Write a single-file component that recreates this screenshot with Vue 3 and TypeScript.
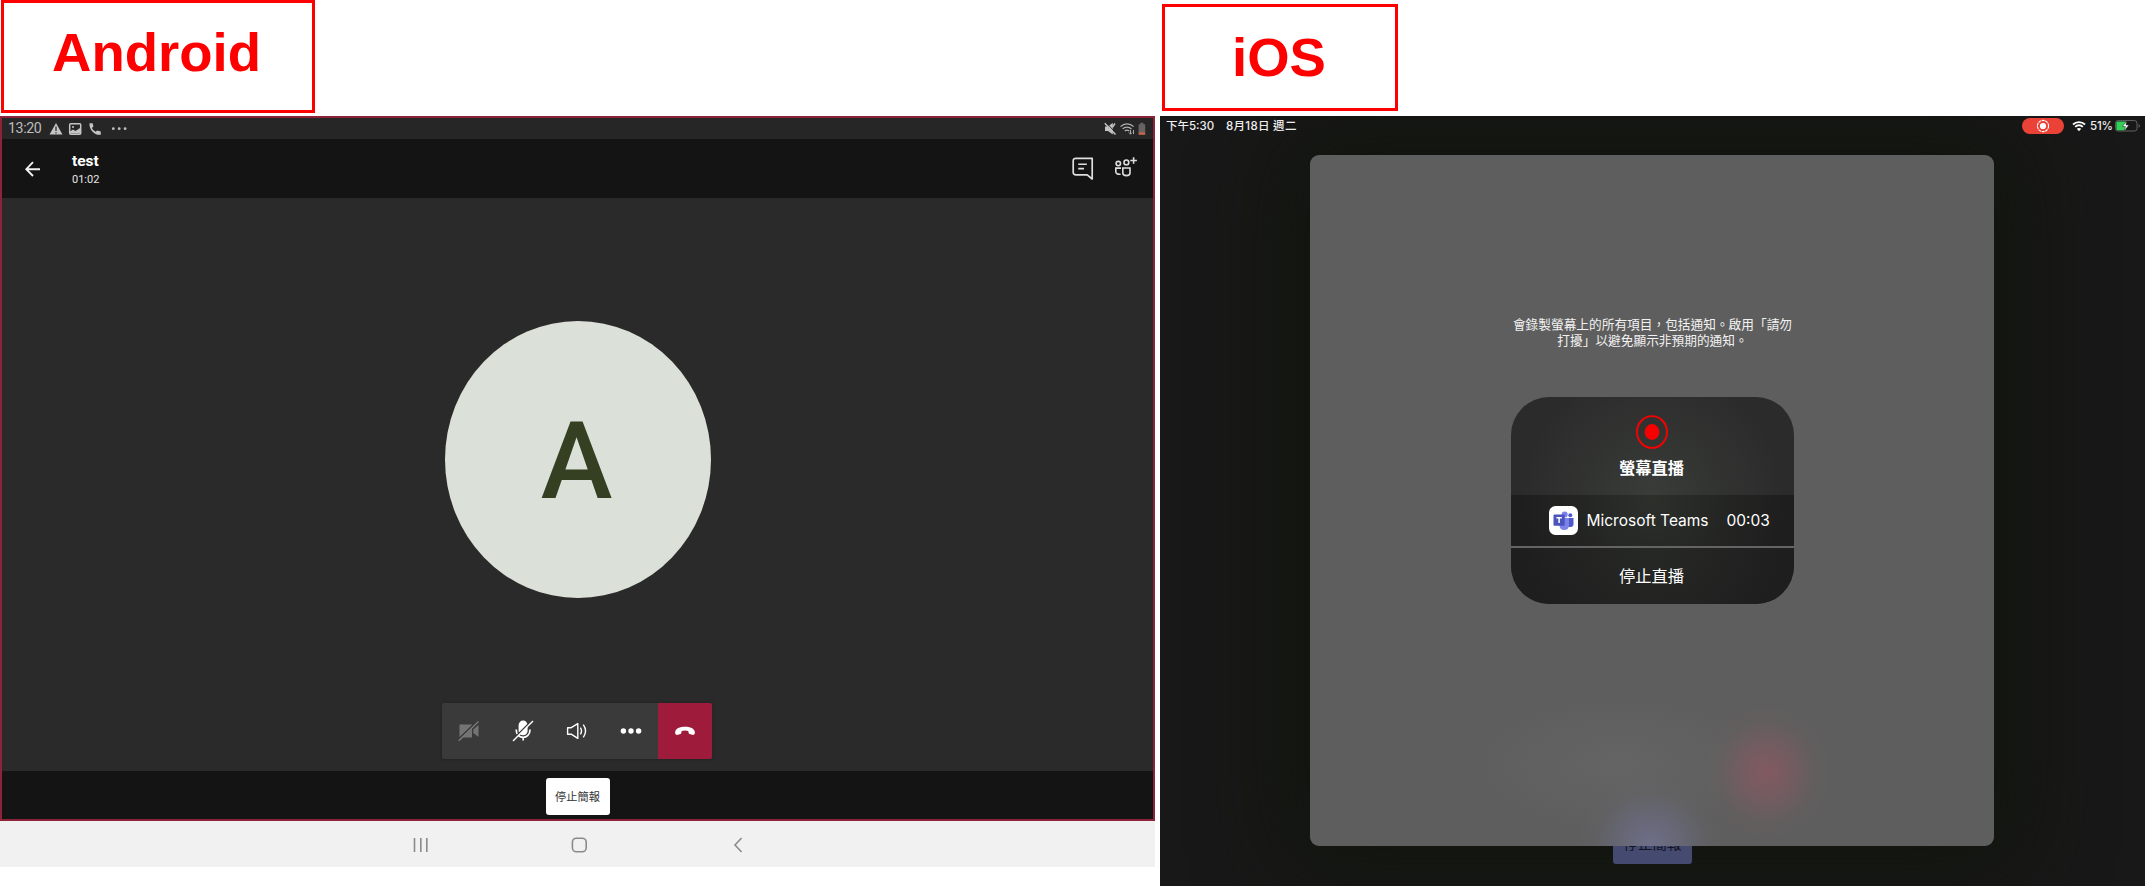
<script setup lang="ts">
const avatarLetter: string = 'A'
const noticeLines: string[] = [
  '會錄製螢幕上的所有項目，包括通知。啟用「請勿',
  '打擾」以避免顯示非預期的通知。',
]
</script>

<template>
  <main class="board">
    <section class="column android">
      <div class="label label-android">Android</div>
      <div class="screen">
        <div class="a-status">
          <span class="a-clock">13:20</span>
          <svg class="a-left-icons" viewBox="0 0 80 14" width="80" height="14">
            <path d="M7 1 L13.5 12.5 H0.5Z" fill="#c4c4c4" />
            <path d="M7 4.5V9M7 10.2V11.6" stroke="#262626" stroke-width="1.2" />
            <rect x="20.7" y="1.7" width="11" height="10.6" rx="1" fill="none" stroke="#c4c4c4" stroke-width="1.5" />
            <path d="M21 11.5V9.5L24 7.5L26.5 9L31 6V11.5Z" fill="#c4c4c4" />
            <circle cx="24" cy="5" r="1" fill="#c4c4c4" />
            <path d="M40.5 1.2L43.6 1.2L44.4 4.5L42.9 6C43.9 7.8 45 9 46.7 9.8L48.2 8.4L51.8 9.4V12.8C45 13.4 40 7.5 40.5 1.2Z" fill="#c4c4c4" />
            <circle cx="64.3" cy="6.7" r="1.4" fill="#bdbdbd" />
            <circle cx="70.2" cy="6.7" r="1.4" fill="#bdbdbd" />
            <circle cx="76.1" cy="6.7" r="1.4" fill="#bdbdbd" />
          </svg>
          <svg class="a-right-icons" viewBox="0 0 42 14" width="42" height="14">
            <path d="M1 4.6H4L8.8 .8V12.6L4 9H1Z" fill="#c2c2c2" />
            <path d="M1.8 .4L12 11" stroke="#262626" stroke-width="1" />
            <path d="M.8 1.2L11.5 12.4M8.6 5L11 1.5" stroke="#c2c2c2" stroke-width="1.5" />
            <path d="M16.5 4.6C20 1 26 1 29.6 4.6M18.6 6.9C21 4.6 25 4.6 27.5 6.9M20.8 9.1C22 8 24 8 25.2 9.1" fill="none" stroke="#b0b0b0" stroke-width="1.3" />
            <path d="M26.5 8V12M25 10.6L26.5 12.2L28 10.6M29.5 12V8" fill="none" stroke="#aaa" stroke-width="1" />
            <path d="M34.6 2.3H36.4V.8H39.4V2.3H41.2V10.7H34.6Z" fill="#686464" />
            <rect x="34.6" y="10.3" width="6.6" height="2.5" fill="#c4694b" />
          </svg>
        </div>
        <header class="a-header">
          <svg class="a-back" viewBox="0 0 16 16" width="16" height="16">
            <path d="M15 8.2H1.5M8 1.2L1.3 8.2L8 15" fill="none" stroke="#f2f2f2" stroke-width="1.9" />
          </svg>
          <div class="a-title">
            <strong>test</strong>
            <span>01:02</span>
          </div>
          <svg class="a-chat" viewBox="0 0 22 24" width="22" height="24">
            <path d="M20.2 22L15.2 17.8H3.8C2.3 17.8 1.2 16.8 1.2 15.2V3.8C1.2 2.3 2.3 1.3 3.8 1.3H20.2Z" fill="none" stroke="#dedede" stroke-width="1.7" stroke-linejoin="round" />
            <path d="M6.2 7.2H14.8M6.2 11.6H12" stroke="#dedede" stroke-width="1.6" />
          </svg>
          <svg class="a-people" viewBox="0 0 24 22" width="24" height="22">
            <g fill="none" stroke="#dedede" stroke-width="1.6">
              <circle cx="4.3" cy="7.6" r="2.2" />
              <circle cx="12.4" cy="6.4" r="2.4" />
              <path d="M7 12.1H1.8V15.8C1.8 17.6 3.6 18.6 6.6 18.2" />
              <path d="M8.8 12H16V17Q16 19.6 12.4 19.6Q8.8 19.6 8.8 17Z" />
              <path d="M19.6 1.2V7.8M16.3 4.5H22.9" />
            </g>
          </svg>
        </header>
        <div class="a-stage">
          <div class="avatar">{{ avatarLetter }}</div>
          <div class="toolbar">
            <div class="tool">
              <svg viewBox="0 0 22 22" width="22" height="22">
                <path d="M1.5 4.5H14V17.5H1.5ZM15.3 9.5L20.5 5V17L15.3 13Z" fill="#747474" />
                <path d="M0 20.2L20 1" stroke="#3a3a3a" stroke-width="2.6" />
                <path d="M0.8 20.8L20.6 1.4" stroke="#808080" stroke-width="1.3" />
              </svg>
            </div>
            <div class="tool">
              <svg viewBox="0 0 22 22" width="22" height="22">
                <rect x="6.6" y=".6" width="9" height="14.6" rx="4.4" fill="#fff" />
                <path d="M4.2 9.5C4 20 18.2 20 18 9.5M11.2 17.5V20.5" fill="none" stroke="#fff" stroke-width="1.7" />
                <path d="M0 20.4L20 .4" stroke="#3a3a3a" stroke-width="1.6" />
                <path d="M1 21L21 1" stroke="#fff" stroke-width="1.5" />
              </svg>
            </div>
            <div class="tool">
              <svg viewBox="0 0 22 22" width="22" height="22">
                <path d="M1.6 7.7H5.2L11.8 3.6V18.4L5.2 14.2H1.6Z" fill="none" stroke="#fff" stroke-width="1.4" stroke-linejoin="round" />
                <path d="M14.4 7.6Q16.6 11 14.4 14.4M17.3 4.6Q21.8 11 17.3 17.4" fill="none" stroke="#fff" stroke-width="1.4" />
              </svg>
            </div>
            <div class="tool">
              <svg viewBox="0 0 22 22" width="22" height="22">
                <circle cx="3.4" cy="11" r="2.7" fill="#fff" />
                <circle cx="11" cy="11" r="2.7" fill="#fff" />
                <circle cx="18.6" cy="11" r="2.7" fill="#fff" />
              </svg>
            </div>
            <div class="tool hangup">
              <svg viewBox="0 0 22 22" width="22" height="22">
                <path d="M1.1 12.2C1.6 5 20.4 5 20.9 12.2C21 14.2 19.7 15.2 18.2 14.8L15.5 14C14.4 13.6 14.6 12.4 14.3 11.1C12.4 10.3 9.6 10.3 7.7 11.1C7.4 12.4 7.6 13.6 6.5 14L3.8 14.8C2.3 15.2 1 14.2 1.1 12.2Z" fill="#fff" />
              </svg>
            </div>
          </div>
        </div>
        <div class="a-footer">
          <button class="stop-share">停止簡報</button>
        </div>
      </div>
      <nav class="a-nav">
        <svg viewBox="0 0 330 16" width="330" height="16">
          <g fill="none" stroke="#8b8b8b" stroke-width="1.6">
            <path d="M1.5 1V15M7.8 1V15M13.8 1V15" />
            <rect x="159.4" y="1.2" width="13.8" height="13.6" rx="4" />
            <path d="M328.6 1L322 8L328.6 15" />
          </g>
        </svg>
      </nav>
    </section>

    <section class="column ios">
      <div class="label label-ios">iOS</div>
      <div class="tablet">
        <div class="i-status">
          <span class="i-time">下午5:30</span>
          <span class="i-date">8月18日 週二</span>
          <span class="rec-pill">
            <svg viewBox="0 0 14 14" width="14" height="14">
              <circle cx="7" cy="7" r="5.6" fill="none" stroke="#fff" stroke-width="1.1" stroke-dasharray="2.9 .6" />
              <circle cx="7" cy="7" r="3.1" fill="#fff" />
            </svg>
          </span>
          <svg class="i-wifi" viewBox="0 0 14 12" width="14" height="12">
            <path d="M1 4.5C4.3 1.2 9.7 1.2 13 4.5M3.2 6.8C5.3 4.7 8.7 4.7 10.8 6.8" fill="none" stroke="#fff" stroke-width="1.8" />
            <path d="M4.8 8.8Q7 7 9.2 8.8L7 11.2Z" fill="#fff" />
          </svg>
          <span class="i-percent">51%</span>
          <svg class="i-battery" viewBox="0 0 26 12" width="26" height="12">
            <rect x=".6" y=".6" width="21.4" height="10.4" rx="2.4" fill="none" stroke="#636363" stroke-width="1" />
            <path d="M2.8 1.4H11V10.2H2.8Q1.4 10.2 1.4 9.2V2.4Q1.4 1.4 2.8 1.4Z" fill="#31d158" />
            <path d="M11.8 1L7.4 6.5H10.4L9.6 10.6L14 5H11Z" fill="#fff" stroke="#171817" stroke-width=".5" />
            <path d="M23.6 4V7.8Q25 7 25 5.9Q25 4.8 23.6 4Z" fill="#636363" />
          </svg>
        </div>
        <div class="modal">
          <p class="notice"><span v-for="line in noticeLines" :key="line">{{ line }}</span></p>
          <div class="card">
            <div class="card-head">
              <svg viewBox="0 0 34 34" width="34" height="34">
                <ellipse cx="17" cy="17" rx="15" ry="15.9" fill="none" stroke="#f80000" stroke-width="1.9" />
                <ellipse cx="17" cy="17" rx="7.4" ry="7.9" fill="#f80000" />
              </svg>
              <strong>螢幕直播</strong>
            </div>
            <div class="card-app">
              <svg class="teams" viewBox="0 0 29 29" width="29" height="29">
                <rect width="29" height="29" rx="6.5" fill="#fff" />
                <circle cx="15.7" cy="8.5" r="3" fill="#7b83eb" />
                <circle cx="21.3" cy="9.3" r="2" fill="#5059c9" />
                <path d="M18 12H24.5V18Q24.5 21 21.5 21H18Z" fill="#5059c9" />
                <path d="M10.5 12H20V19Q20 24 15.2 24Q10.5 24 10.5 19Z" fill="#7b83eb" />
                <rect x="4.5" y="8.6" width="11.2" height="11.2" rx="1" fill="#4b53bc" />
                <path d="M7.4 11.7H12.8M10.1 11.7V17" stroke="#fff" stroke-width="1.5" />
              </svg>
              <span class="app-name">Microsoft Teams</span>
              <span class="app-time">00:03</span>
            </div>
            <div class="card-stop">停止直播</div>
          </div>
        </div>
        <div class="peek"><span>停止簡報</span></div>
      </div>
    </section>
  </main>
</template>

<style>
body {
  margin: 0;
  background: #fff;
}
</style>

<style scoped>
.board {
  display: flex;
  gap: 5px;
  width: 2145px;
  height: 886px;
  overflow: hidden;
  font-family: Roboto, "Noto Sans CJK TC", sans-serif;
}
.column {
  display: flex;
  flex-direction: column;
}
.android { width: 1155px; }
.ios { width: 985px; }
.label {
  box-sizing: border-box;
  border: 3px solid #f00;
  color: #f00;
  font: bold 54.5px/1 "Liberation Sans", sans-serif;
  text-align: center;
}
.label-android {
  width: 314px;
  height: 113px;
  margin: 0 0 3px 1px;
  padding: 23px 3px 0 0;
}
.label-ios {
  width: 236px;
  height: 107px;
  margin: 4px 0 5px 2px;
  padding: 24px 2px 0 0;
}
.screen {
  box-sizing: border-box;
  height: 705px;
  border: 2px solid #8c2338;
  display: flex;
  flex-direction: column;
  background: #2a2a2a;
}
.a-status {
  height: 21px;
  display: flex;
  align-items: center;
  background: #262626;
  padding: 0 7px 0 6px;
}
.a-clock {
  width: 41px;
  color: #bdbdbd;
  font-size: 14.2px;
  line-height: 21px;
  letter-spacing: -.4px;
}
.a-right-icons { margin-left: auto; }
.a-header {
  height: 59px;
  display: flex;
  align-items: center;
  background: #141414;
  padding: 0 15px 0 23px;
}
.a-title {
  display: flex;
  flex-direction: column;
  margin: 3px 0 0 31px;
  color: #fff;
}
.a-title strong { font-size: 15.5px; line-height: 19px; }
.a-title span { font-size: 11px; line-height: 17px; color: #e6e6e6; }
.a-chat { margin-left: auto; }
.a-people { margin: 0 0 3px 20px; }
.a-stage {
  flex: 1;
  display: flex;
  flex-direction: column;
  align-items: center;
  background: #2a2a2a;
}
.avatar {
  width: 266px;
  height: 277px;
  margin-top: 123px;
  border-radius: 50%;
  background: #dbe1d8;
  color: #344021;
  font-size: 108px;
  font-weight: 500;
  line-height: 280px;
  text-align: center;
  text-indent: -2px;
}
.toolbar {
  display: flex;
  margin: 105px 1px 0 0;
  border-radius: 2px;
  overflow: hidden;
  background: #3a3a3a;
  box-shadow: 0 0 3px #202020;
}
.tool {
  width: 54px;
  height: 56px;
  display: flex;
  align-items: center;
  justify-content: center;
}
.hangup { background: #9e1b3b; }
.a-footer {
  height: 48px;
  display: flex;
  align-items: center;
  justify-content: center;
  background: #141414;
}
.stop-share {
  width: 64px;
  height: 37px;
  margin-top: 2px;
  padding: 0;
  border: 0;
  border-radius: 3px;
  background: #fff;
  color: #333;
  font: 11.2px "Noto Sans CJK TC", sans-serif;
}
.a-nav {
  height: 46px;
  box-sizing: border-box;
  display: flex;
  align-items: center;
  background: #f1f1f1;
  padding: 2px 0 0 413px;
}
.tablet {
  height: 770px;
  background: #181818;
  overflow: hidden;
}
.i-status {
  height: 39px;
  display: flex;
  align-items: flex-start;
  padding: 0 4px 0 6px;
  color: #eee;
  font: 500 11.5px/20px Inter, "Noto Sans CJK TC", sans-serif;
  white-space: nowrap;
}
.i-time { width: 60px; }
.i-date { letter-spacing: .3px; }
.rec-pill {
  width: 42px;
  height: 16px;
  margin: 2px 8px 0 auto;
  border-radius: 8px;
  background: #eb4238;
  display: flex;
  align-items: center;
  justify-content: center;
}
.i-wifi { margin-top: 4px; }
.i-percent { width: 25px; margin-left: 4px; letter-spacing: -.2px; }
.i-battery { margin-top: 4px; }
.modal {
  width: 684px;
  height: 691px;
  margin-left: 150px;
  border-radius: 9px;
  display: flex;
  flex-direction: column;
  align-items: center;
  background:
    radial-gradient(ellipse 68px 72px at 457px 617px, rgba(142, 88, 98, .75) 0, rgba(135, 90, 98, .5) 38%, rgba(120, 92, 95, .15) 72%, transparent 100%),
    radial-gradient(ellipse 76px 72px at 341px 691px, rgba(114, 114, 146, .85) 0, rgba(110, 110, 138, .5) 42%, rgba(105, 105, 118, .16) 74%, transparent 100%),
    radial-gradient(ellipse 150px 70px at 310px 610px, #646464 0, #5e5e5e 100%);
  box-shadow: 0 0 90px 20px #11150c;
}
.notice {
  margin: 161px 0 0;
  display: flex;
  flex-direction: column;
  align-items: center;
  color: #f2f2f2;
  font: 12.7px/15.6px "Noto Sans CJK TC", sans-serif;
  white-space: nowrap;
  text-indent: 1px;
}
.card {
  width: 283px;
  height: 207px;
  margin-top: 50px;
  border-radius: 38px;
  overflow: hidden;
  color: #fff;
  background: radial-gradient(circle 130px at 50% 48%, #393c38, #2b2b2b);
}
.card-head {
  height: 98px;
  display: flex;
  flex-direction: column;
  align-items: center;
  padding-top: 18px;
  box-sizing: border-box;
}
.card-head strong {
  font: bold 16.3px/24px "Noto Sans CJK TC", sans-serif;
  margin: 6px 1px 0 0;
}
.card-app {
  height: 51px;
  border-bottom: 2px solid #646464;
  display: flex;
  align-items: center;
  padding-left: 38px;
  background: radial-gradient(circle 130px at 50% 10%, #2c2f2a, #1e1e1e);
  font: 15.5px Inter, sans-serif;
}
.app-name { margin-left: 9px; width: 140px; white-space: nowrap; }
.card-stop {
  height: 56px;
  padding-right: 1px;
  background: radial-gradient(circle 130px at 50% -30%, #282a27, #1e1e1e);
  text-align: center;
  font: 16.3px/54px "Noto Sans CJK TC", sans-serif;
}
.peek {
  width: 79px;
  height: 18px;
  margin-left: 453px;
  border-radius: 0 0 3px 3px;
  background: #454a70;
  position: relative;
  overflow: hidden;
  display: flex;
  justify-content: center;
  align-items: flex-start;
  color: #11141f;
  font: 14.5px/18px "Noto Sans CJK TC", sans-serif;
}
.peek span { margin-top: -12.5px; }
</style>
